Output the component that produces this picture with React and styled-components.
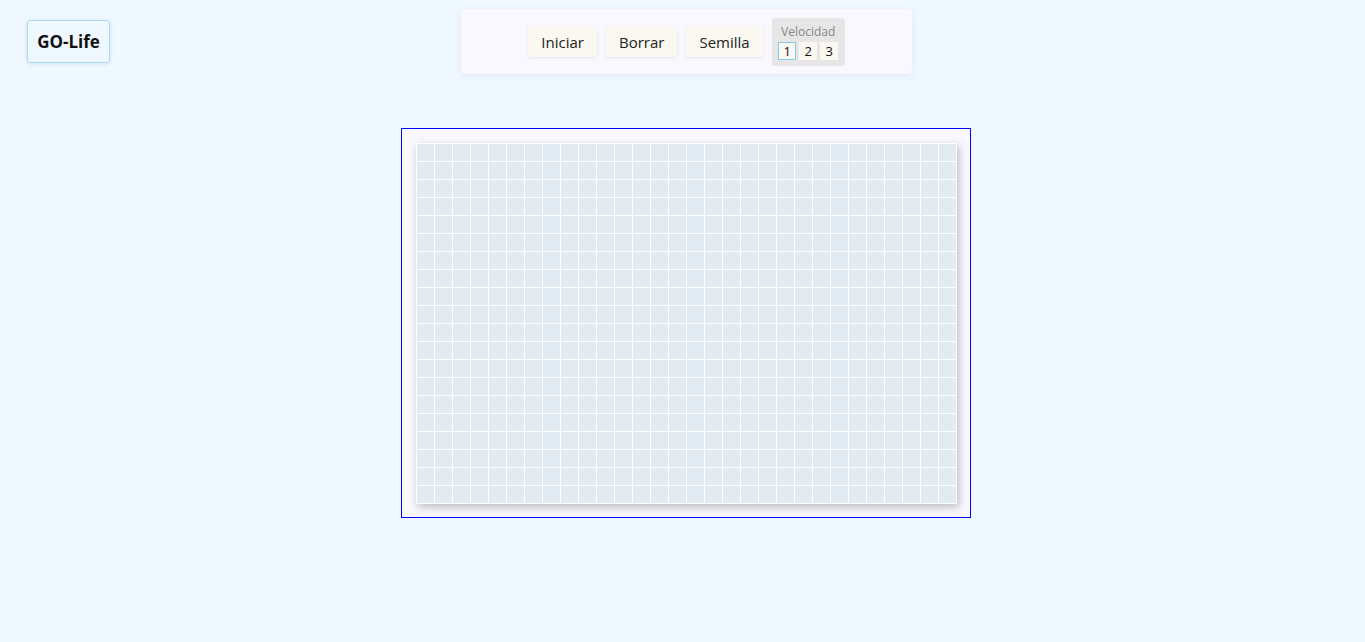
import React from 'react';
import styled, { createGlobalStyle } from 'styled-components';

const GlobalStyle = createGlobalStyle`
  html, body {
    margin: 0;
    padding: 0;
    background: #f0f8ff;
    font-family: 'Open Sans', 'Liberation Sans', sans-serif;
  }
`;

const Page = styled.div`
  min-height: 642px;
  padding-left: 8px;
  box-sizing: border-box;
`;

const Header = styled.header`
  display: grid;
  grid-template-columns: 1fr auto 1fr;
  align-items: start;
`;

const Logo = styled.div`
  justify-self: start;
  margin: 20px 0 0 19px;
  width: 83px;
  height: 43px;
  box-sizing: border-box;
  display: flex;
  align-items: center;
  justify-content: center;
  border: 1px solid #a9dbf0;
  border-radius: 3px;
  background: #f0f8ff;
  box-shadow: 0 1px 4px rgba(120, 170, 210, 0.25);
  font-weight: 700;
  font-size: 17px;
  color: #111;
`;

const Toolbar = styled.nav`
  margin-top: 9px;
  width: 451px;
  height: 65px;
  box-sizing: border-box;
  display: flex;
  align-items: center;
  justify-content: center;
  gap: 9px;
  background: #f8f8fe;
  border-radius: 4px;
  box-shadow: 0 2px 8px rgba(150, 170, 200, 0.18);
`;

const Button = styled.button`
  height: 30px;
  padding: 0 13px;
  border: none;
  border-radius: 2px;
  background: #faf8f1;
  box-shadow: 0 1px 3px rgba(160, 170, 190, 0.25);
  font-family: inherit;
  font-size: 15px;
  color: #222;
  cursor: pointer;
`;

const Speed = styled.div`
  width: 73px;
  height: 48px;
  box-sizing: border-box;
  padding-top: 5px;
  display: flex;
  flex-direction: column;
  align-items: center;
  background: #e6e6e6;
  border-radius: 3px;
`;

const SpeedLabel = styled.span`
  font-size: 12px;
  line-height: 17px;
  color: #888;
`;

const SpeedOptions = styled.div`
  display: flex;
  gap: 3px;
  margin-top: 2px;
`;

const SpeedButton = styled.button`
  width: 18px;
  height: 18px;
  padding: 0;
  box-sizing: border-box;
  border: 1px solid ${p => (p.$active ? '#7ecbea' : '#faf8f1')};
  background: #faf8f1;
  font-family: inherit;
  font-size: 13px;
  line-height: 16px;
  color: #111;
  cursor: pointer;
`;

const Board = styled.main`
  display: flex;
  justify-content: center;
  margin-top: 54px;
  padding-right: 2px;
`;

const Frame = styled.div`
  width: 570px;
  height: 390px;
  box-sizing: border-box;
  border: 1px solid #0000ff;
  background: #f8f8fe;
  padding: 14px 0 0 14px;
`;

const Grid = styled.div`
  display: grid;
  grid-template-columns: repeat(30, 17px);
  grid-auto-rows: 17px;
  gap: 1px;
  padding: 1px;
  width: max-content;
  background: #ffffff;
  box-shadow: 2px 3px 8px rgba(0, 0, 0, 0.25);
`;

const Cell = styled.div`
  background: ${p => (p.$alive ? '#333' : '#e3ebf2')};
`;

const cells = Array.from({ length: 600 }, (_, i) => i);

const App = () => (
  <Page>
    <GlobalStyle />
    <Header>
      <Logo>GO-Life</Logo>
      <Toolbar>
        <Button>Iniciar</Button>
        <Button>Borrar</Button>
        <Button>Semilla</Button>
        <Speed>
          <SpeedLabel>Velocidad</SpeedLabel>
          <SpeedOptions>
            <SpeedButton $active>1</SpeedButton>
            <SpeedButton>2</SpeedButton>
            <SpeedButton>3</SpeedButton>
          </SpeedOptions>
        </Speed>
      </Toolbar>
      <div />
    </Header>
    <Board>
      <Frame>
        <Grid>
          {cells.map(i => (
            <Cell key={i} />
          ))}
        </Grid>
      </Frame>
    </Board>
  </Page>
);

export default App;
